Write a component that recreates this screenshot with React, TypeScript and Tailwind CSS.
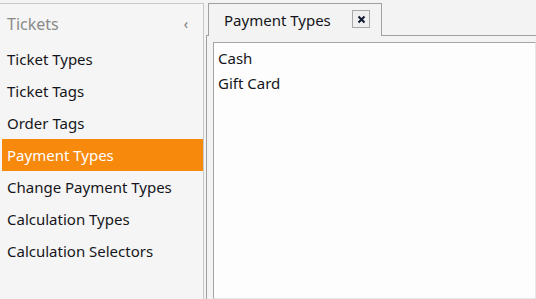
const items = [
  "Ticket Types",
  "Ticket Tags",
  "Order Tags",
  "Payment Types",
  "Change Payment Types",
  "Calculation Types",
  "Calculation Selectors",
];

const rows = ["Cash", "Gift Card"];

export default function App() {
  return (
    <div className="w-[536px] h-[299px] flex bg-[#f3f3f3] overflow-hidden font-['Noto_Sans',sans-serif] text-[15px]">
      {/* sidebar */}
      <aside className="w-[204px] mt-[3px] flex flex-col border-t border-r border-[#c9c9c9] bg-[#f5f5f5]">
        <div className="h-[39px] flex items-center justify-between pl-[7px] pr-[15px]">
          <span className="text-[16px] text-[#8a8a8a]">Tickets</span>
          <span className="text-[14px] text-[#777]">‹</span>
        </div>
        <ul className="flex flex-col pl-[2px]">
          {items.map((item) => (
            <li
              key={item}
              className={
                item === "Payment Types"
                  ? "h-[32px] flex items-center pl-[5px] bg-[#f7890c] text-white"
                  : "h-[32px] flex items-center pl-[5px] text-[#151520]"
              }
            >
              {item}
            </li>
          ))}
        </ul>
      </aside>

      {/* tab control */}
      <main className="flex-1 flex flex-col pl-[2px]">
        <div className="h-[36px] flex">
          <div className="w-[2px] border-b border-[#a0a0a0]" />
          <div className="w-[174px] mt-[3px] flex items-center justify-between pl-[15px] pr-[11px] border-l border-t border-r border-[#a0a0a0] text-[#151520]">
            <span>Payment Types</span>
            <button className="w-[18px] h-[18px] mb-[2px] flex items-center justify-center border border-[#a8a8a8] bg-[#efefef]">
              <svg width="9" height="9" viewBox="0 0 9 9">
                <path d="M1.5 1.5 L7.5 7.5 M7.5 1.5 L1.5 7.5" stroke="#101830" strokeWidth="2" />
              </svg>
            </button>
          </div>
          <div className="flex-1 border-b border-[#a0a0a0]" />
        </div>
        <div className="flex-1 flex border-l border-[#a0a0a0] pl-[6px] pt-[6px]">
          <div className="flex-1 bg-[#fdfdfd] border-l border-t border-[#a5a5a5] border-r border-r-[#e6e6e6] border-b border-b-[#e6e6e6] pt-[3px] pl-[4px]">
            {rows.map((r) => (
              <div key={r} className="h-[25px] flex items-center text-[#151520]">
                {r}
              </div>
            ))}
          </div>
        </div>
      </main>
    </div>
  );
}
